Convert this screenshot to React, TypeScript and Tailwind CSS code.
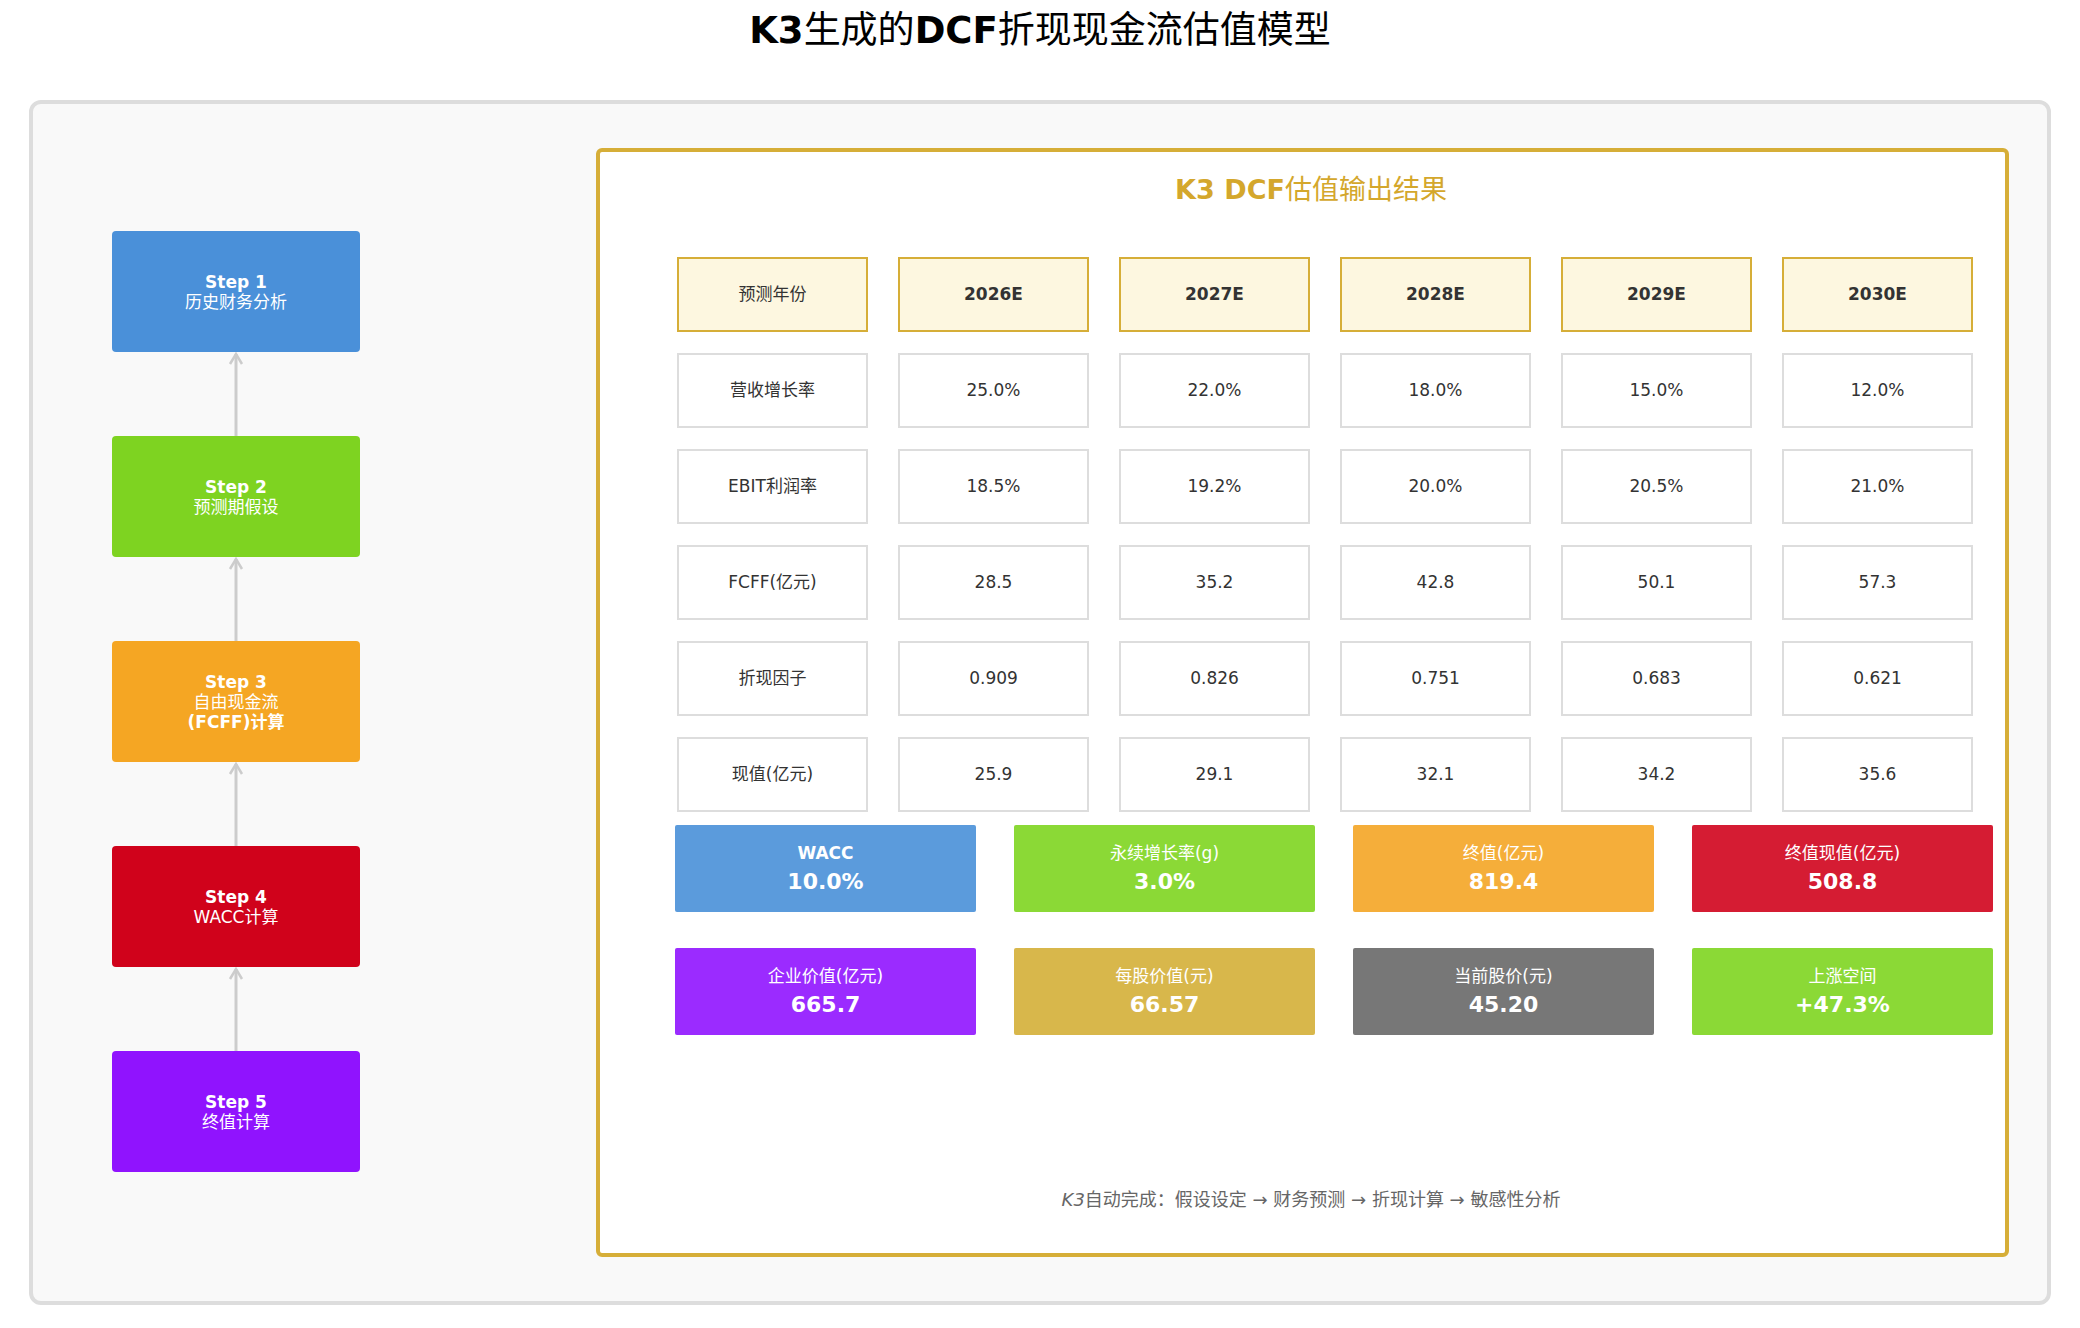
const FONT = { fontFamily: '"DejaVu Sans", "Noto Sans CJK SC", sans-serif' };

const steps = [
    { n: 'Step 1', lines: ['历史财务分析'], color: 'bg-[#4a90d9]' },
    { n: 'Step 2', lines: ['预测期假设'], color: 'bg-[#7ed321]' },
    { n: 'Step 3', lines: ['自由现金流', '(FCFF)计算'], color: 'bg-[#f5a623]' },
    { n: 'Step 4', lines: ['WACC计算'], color: 'bg-[#d0021b]' },
    { n: 'Step 5', lines: ['终值计算'], color: 'bg-[#9013fe]' },
];

const header = ['预测年份', '2026E', '2027E', '2028E', '2029E', '2030E'];
const rows = [
    ['营收增长率', '25.0%', '22.0%', '18.0%', '15.0%', '12.0%'],
    ['EBIT利润率', '18.5%', '19.2%', '20.0%', '20.5%', '21.0%'],
    ['FCFF(亿元)', '28.5', '35.2', '42.8', '50.1', '57.3'],
    ['折现因子', '0.909', '0.826', '0.751', '0.683', '0.621'],
    ['现值(亿元)', '25.9', '29.1', '32.1', '34.2', '35.6'],
];

const cards = [
    [
        { label: 'WACC', value: '10.0%', color: 'bg-[#5b9bdc]', bold: true },
        { label: '永续增长率(g)', value: '3.0%', color: 'bg-[#8bd936]' },
        { label: '终值(亿元)', value: '819.4', color: 'bg-[#f5ae3a]' },
        { label: '终值现值(亿元)', value: '508.8', color: 'bg-[#d51c33]' },
    ],
    [
        { label: '企业价值(亿元)', value: '665.7', color: 'bg-[#9b2bff]' },
        { label: '每股价值(元)', value: '66.57', color: 'bg-[#d8b74b]' },
        { label: '当前股价(元)', value: '45.20', color: 'bg-[#777777]' },
        { label: '上涨空间', value: '+47.3%', color: 'bg-[#8bd936]' },
    ],
];

function Arrow() {
    return (
        <svg width="20" height="84" viewBox="0 0 20 84" className="block">
            <line x1="10" y1="2" x2="10" y2="84" stroke="#cccccc" strokeWidth="3" />
            <path d="M4 12 L10 2 L16 12" fill="none" stroke="#cccccc" strokeWidth="2.5" />
        </svg>
    );
}

export default function App() {
    return (
        <div className="w-[2080px] h-[1328px] bg-white text-black" style={FONT}>
            <h1 className="text-center text-[37px] font-bold pt-[8px] h-[100px] leading-[46px]">
                K3<span className="font-normal">生成的</span>DCF<span className="font-normal">折现现金流估值模型</span>
            </h1>
            <div className="mx-[29px] h-[1205px] bg-[#f9f9f9] border-[4px] border-[#dddddd] rounded-[12px] flex">
                <div className="pl-[79px] pt-[127px] w-[563px] flex flex-col items-start">
                    {steps.map((s, i) => (
                        <div key={s.n} className="flex flex-col items-center">
                            {i > 0 && <Arrow />}
                            <div className={`w-[248px] h-[121px] rounded-[4px] ${s.color} text-white flex flex-col items-center justify-center text-[17px] leading-[20px]`}>
                                <span className="font-bold">{s.n}</span>
                                {s.lines.map((l, j) => (
                                    <span key={l} className={j === 1 ? 'font-bold' : ''}>{l}</span>
                                ))}
                            </div>
                        </div>
                    ))}
                </div>
                <div className="mt-[44px] w-[1413px] h-[1109px] bg-white border-[4px] border-[#d6ae38] rounded-[6px] pl-[77px] pt-[18px] flex flex-col">
                    <div className="text-center text-[27px] font-bold text-[#d4a72c] pr-[60px] h-[87px]">
                        K3 DCF<span className="font-normal">估值输出结果</span>
                    </div>
                    <div className="grid grid-cols-[repeat(6,191px)] gap-x-[30px] gap-y-[21px] text-[17px] text-[#333]">
                        {header.map((h, i) => (
                            <div key={h} className={`h-[75px] bg-[#fdf7e0] border-2 border-[#d6ae38] flex items-center justify-center ${i > 0 ? 'font-bold' : ''}`}>{h}</div>
                        ))}
                        {rows.flat().map((c, i) => (
                            <div key={i} className="h-[75px] bg-white border-2 border-[#dddddd] flex items-center justify-center">{c}</div>
                        ))}
                    </div>
                    <div className="-ml-[2px] mt-[13px] flex flex-col gap-[36px]">
                        {cards.map((row, r) => (
                            <div key={r} className="flex gap-[38px]">
                                {row.map((c) => (
                                    <div key={c.label} className={`w-[301px] h-[87px] rounded-[2px] ${c.color} text-white flex flex-col items-center justify-center`}>
                                        <span className={`text-[17px] leading-[24px] ${c.bold ? 'font-bold' : ''}`}>{c.label}</span>
                                        <span className="text-[22px] font-bold leading-[30px] mt-[2px]">{c.value}</span>
                                    </div>
                                ))}
                            </div>
                        ))}
                    </div>
                    <div className="mt-auto mb-[40px] text-center text-[18px] text-[#666] pr-[60px]">
                        <i>K3</i>自动完成：假设设定 → 财务预测 → 折现计算 → 敏感性分析
                    </div>
                </div>
            </div>
        </div>
    );
}
